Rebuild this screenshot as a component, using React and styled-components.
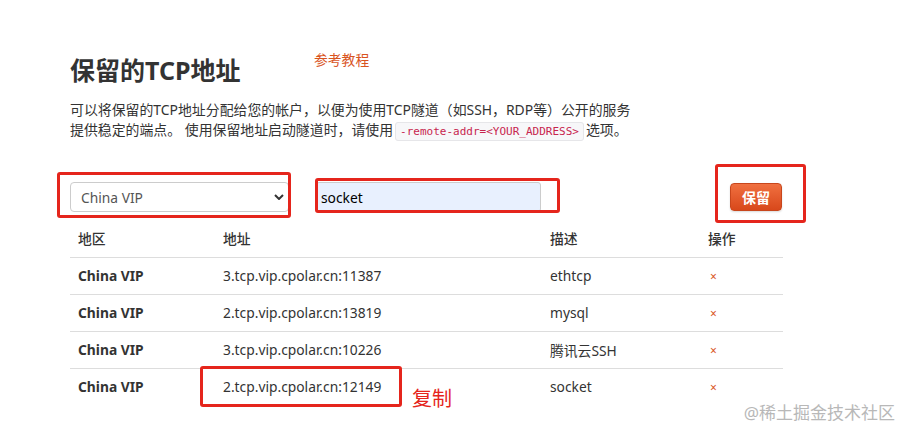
import React from "react";
import styled, { createGlobalStyle } from "styled-components";

const GlobalStyle = createGlobalStyle`
 body {
  margin: 0;
  background: #fff;
  font-family: "Noto Sans", "Noto Sans CJK SC", sans-serif;
  color: #333;
 }
`;

const Page = styled.div`
 position: relative;
 width: 902px;
 height: 429px;
 overflow: hidden;
 padding: 50px 0 0 70px;
 box-sizing: border-box;
`;

const Header = styled.div`
 display: grid;
 grid-template-columns: 244px auto;
 align-items: start;
`;

const Title = styled.h2`
 margin: 2px 0 0;
 font-size: 25px;
 line-height: 36px;
 font-weight: 700;
 color: #333;
`;

const TutorialLink = styled.a`
 font-size: 13.8px;
 line-height: 20px;
 color: #d9541e;
 text-decoration: none;
`;

const Intro = styled.p`
 margin: 12px 0 0;
 font-size: 13.9px;
 line-height: 20px;
 white-space: nowrap;
 color: #333;
`;

const Code = styled.code`
 font-family: "DejaVu Sans Mono", monospace;
 font-size: 11px;
 color: #c7254e;
 background: #f7f7f9;
 border: 1px solid #e6e6e9;
 border-radius: 3px;
 padding: 2px 4px;
 margin: 0 2px;
`;

const FormRow = styled.div`
 display: flex;
 align-items: center;
 margin-top: 40px;
 height: 30px;
 width: 713px;
`;

const Select = styled.select`
 appearance: none;
 width: 219px;
 height: 30px;
 box-sizing: border-box;
 border: 1px solid #ccc;
 border-radius: 4px;
 background: #fff
  url("data:image/svg+xml;utf8,<svg xmlns='http://www.w3.org/2000/svg' width='10' height='6' viewBox='0 0 10 6'><path d='M1 1l4 4 4-4' fill='none' stroke='%23333' stroke-width='2'/></svg>")
  no-repeat right 4px center;
 font-family: inherit;
 font-size: 13.8px;
 color: #555;
 padding: 0 24px 0 10px;
`;

const TextInput = styled.input`
 width: 225px;
 height: 30px;
 box-sizing: border-box;
 margin-left: 27px;
 border: 1px solid #ccc;
 border-radius: 3px;
 background: #e8f0fe;
 font-family: inherit;
 font-size: 13.8px;
 color: #000;
 padding: 0 4px;
`;

const SaveButton = styled.button`
 margin-left: auto;
 margin-right: 1px;
 width: 52px;
 height: 28px;
 border: 1px solid #c8461c;
 border-radius: 4px;
 background: linear-gradient(#f07040, #d8481b);
 color: #fff;
 font-family: inherit;
 font-size: 14px;
 font-weight: 600;
 box-shadow: 0 1px 2px rgba(0, 0, 0, 0.15);
`;

const Table = styled.table`
 margin-top: 8px;
 width: 713px;
 table-layout: fixed;
 border-collapse: collapse;
 font-size: 13.8px;
`;

const Th = styled.th`
 box-sizing: border-box;
 text-align: left;
 font-weight: 500;
 height: 37px;
 padding: 0 8px;
 color: #333;
 white-space: nowrap;
 width: ${(p) => p.$w || "auto"};
`;

const Td = styled.td`
 height: 36px;
 padding: 0 8px;
 border-top: 1px solid #ddd;
 color: #333;
 white-space: nowrap;
 font-weight: ${(p) => (p.$bold ? 700 : 400)};
`;

const Remove = styled.span`
 color: #d9541e;
 font-size: 12px;
 padding-left: 2px;
`;

const Mark = styled.div`
 position: absolute;
 left: ${(p) => p.$x}px;
 top: ${(p) => p.$y}px;
 width: ${(p) => p.$w}px;
 height: ${(p) => p.$h}px;
 border: 3px solid #e5251c;
 border-radius: 3px;
 box-sizing: border-box;
 pointer-events: none;
`;

const CopyNote = styled.div`
 position: absolute;
 left: 412px;
 top: 383px;
 font-size: 20px;
 color: #e5251c;
`;

const Watermark = styled.div`
 position: absolute;
 right: 7px;
 bottom: 5px;
 font-size: 17px;
 color: #b8b8b8;
`;

const rows = [
 ["China VIP", "3.tcp.vip.cpolar.cn:11387", "ethtcp"],
 ["China VIP", "2.tcp.vip.cpolar.cn:13819", "mysql"],
 ["China VIP", "3.tcp.vip.cpolar.cn:10226", "腾讯云SSH"],
 ["China VIP", "2.tcp.vip.cpolar.cn:12149", "socket"],
];

export default function App() {
 return (
  <Page>
   <GlobalStyle />
   <Header>
    <Title>保留的TCP地址</Title>
    <TutorialLink href="#">参考教程</TutorialLink>
   </Header>
   <Intro>
    可以将保留的TCP地址分配给您的帐户，以便为使用TCP隧道（如SSH，RDP等）公开的服务
    <br />
    提供稳定的端点。 使用保留地址启动隧道时，请使用
    <Code>-remote-addr=&lt;YOUR_ADDRESS&gt;</Code>选项。
   </Intro>
   <FormRow>
    <Select defaultValue="China VIP">
     <option>China VIP</option>
     <option>China</option>
    </Select>
    <TextInput defaultValue="socket" />
    <SaveButton>保留</SaveButton>
   </FormRow>
   <Table>
    <thead>
     <tr>
      <Th $w="145px">地区</Th>
      <Th $w="327px">地址</Th>
      <Th $w="158px">描述</Th>
      <Th>操作</Th>
     </tr>
    </thead>
    <tbody>
     {rows.map((r) => (
      <tr key={r[1]}>
       <Td $bold>{r[0]}</Td>
       <Td>{r[1]}</Td>
       <Td>{r[2]}</Td>
       <Td>
        <Remove>×</Remove>
       </Td>
      </tr>
     ))}
    </tbody>
   </Table>
   <Mark $x={57} $y={172} $w={234} $h={46} />
   <Mark $x={315} $y={178} $w={245} $h={35} />
   <Mark $x={715} $y={164} $w={91} $h={59} />
   <Mark $x={200} $y={366} $w={202} $h={41} />
   <CopyNote>复制</CopyNote>
   <Watermark>@稀土掘金技术社区</Watermark>
  </Page>
 );
}
